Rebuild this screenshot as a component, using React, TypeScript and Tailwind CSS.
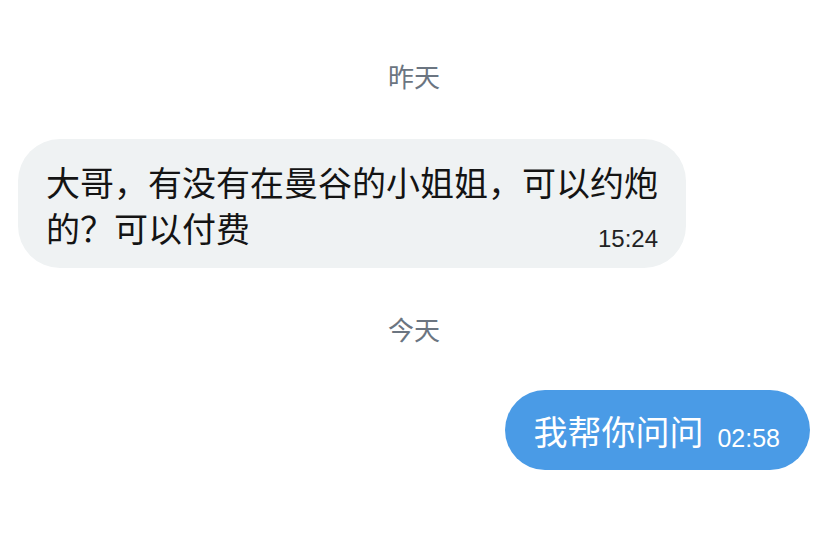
import { FC } from "react";

const cjk = { fontFamily: '"Noto Sans CJK SC", "Noto Sans", sans-serif' };
const num = { fontFamily: '"Liberation Sans", Roboto, sans-serif' };

const DayLabel: FC<{ text: string }> = ({ text }) => (
  <div className="flex justify-center">
    <span className="text-[26px] leading-[36px] text-[#6b7581]" style={cjk}>
      {text}
    </span>
  </div>
);

export default function App() {
  return (
    <div className="w-[828px] h-[533px] bg-white overflow-hidden pt-[58px]" style={cjk}>
      <DayLabel text="昨天" />

      <div className="mt-[45px] pl-[18px]">
        <div className="w-[668px] rounded-[42px] bg-[#eff2f3] pl-[28px] pr-[28px] pt-[20px] pb-[17px] text-[34px] leading-[46px] text-[#141414]">
          <div>大哥，有没有在曼谷的小姐姐，可以约炮</div>
          <div className="flex justify-between">
            <span>的？可以付费</span>
            <span className="mt-[21px] text-[24px] leading-[25px] text-[#222]" style={num}>
              15:24
            </span>
          </div>
        </div>
      </div>

      <div className="mt-[43px]">
        <DayLabel text="今天" />
      </div>

      <div className="mt-[43px] flex justify-end pr-[18px]">
        <div className="flex items-baseline h-[80px] rounded-full bg-[#4a9be6] pl-[28px] pr-[30px] pt-[18px]">
          <span className="text-[34px] leading-[46px] text-white">我帮你问问</span>
          <span className="ml-[14px] text-[25px] text-white relative top-[2px]" style={num}>
            02:58
          </span>
        </div>
      </div>
    </div>
  );
}
